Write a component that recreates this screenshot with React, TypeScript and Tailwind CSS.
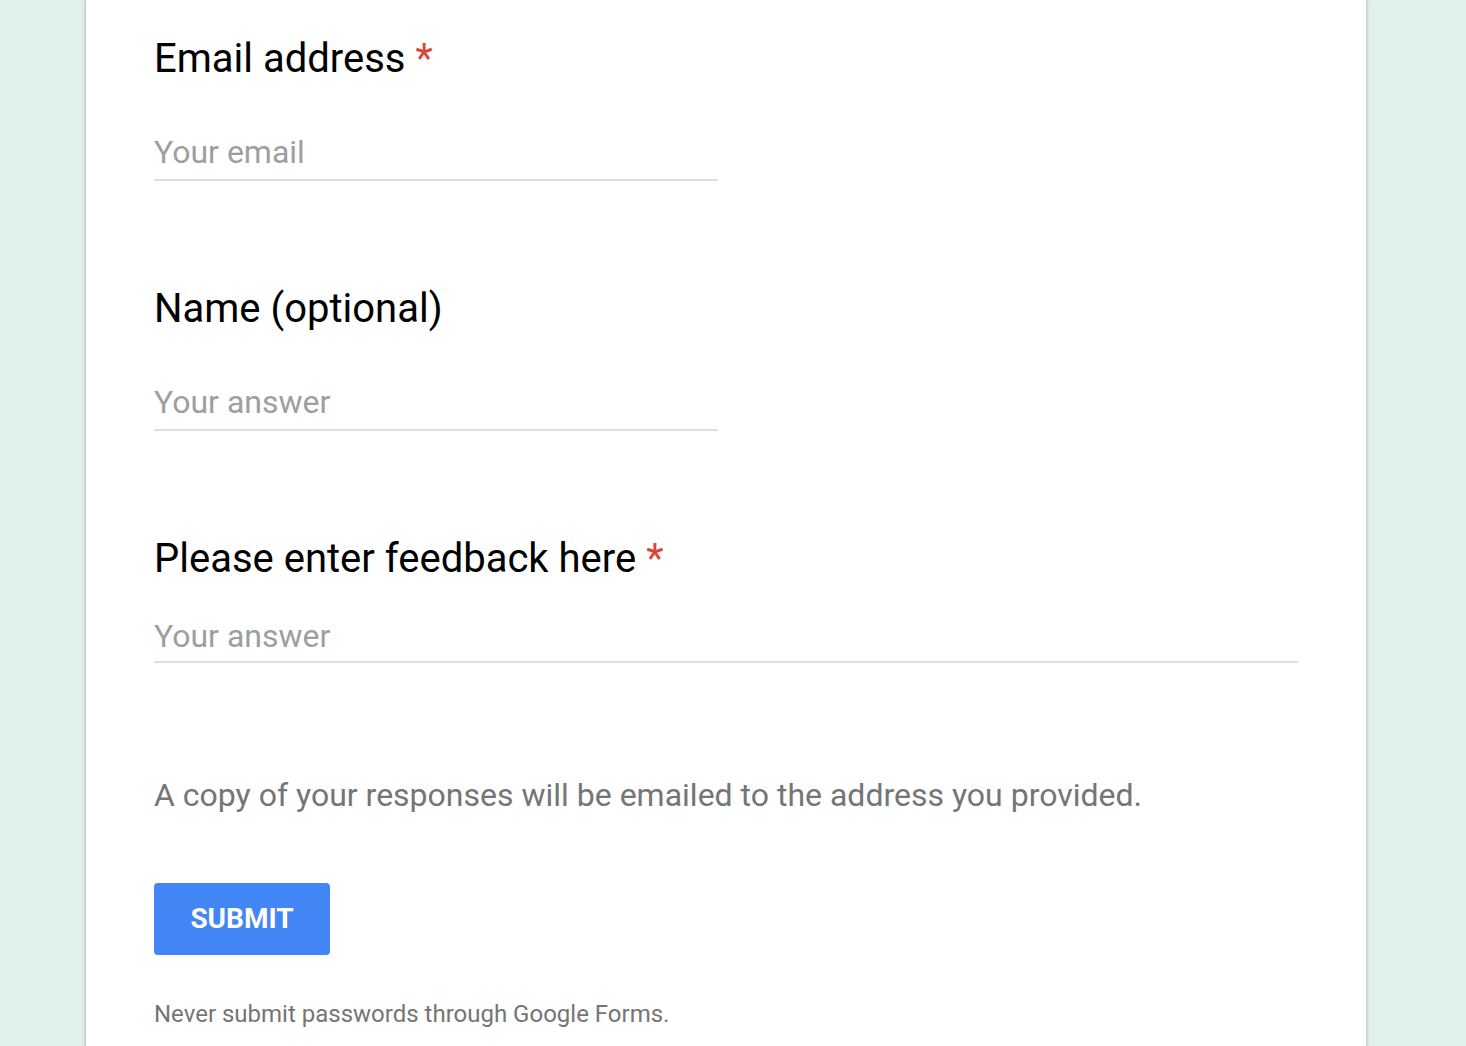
const Question = ({ title, required }: { title: string; required?: boolean }) => (
  <h2 className="text-[40px] leading-[48px] text-black">
    {title}
    {required && <span className="ml-[10px] text-[#db4437]">*</span>}
  </h2>
);

const Answer = ({ placeholder, wide }: { placeholder: string; wide?: boolean }) => (
  <input
    type="text"
    placeholder={placeholder}
    className={
      (wide ? "w-full h-[47px] pb-[5px] " : "w-[564px] h-[49px] pb-[7px] ") +
      "border-b-2 border-[#e0e0e0] bg-transparent text-[32px] leading-[40px] text-[#212121] outline-none placeholder:text-[#9e9e9e]"
    }
  />
);

export default function App() {
  return (
    <div className="flex min-h-[1046px] w-full bg-[#e0f1e9] font-['Roboto',sans-serif]">
      <div className="ml-[86px] flex w-[1280px] flex-col bg-white px-[68px] pt-[35px] pb-[20px] shadow-[0_0_4px_rgba(0,0,0,0.3)]">
        <Question title="Email address" required />
        <div className="mt-[49px]">
          <Answer placeholder="Your email" />
        </div>

        <div className="mt-[104px]">
          <Question title="Name (optional)" />
        </div>
        <div className="mt-[49px]">
          <Answer placeholder="Your answer" />
        </div>

        <div className="mt-[104px]">
          <Question title="Please enter feedback here" required />
        </div>
        <div className="mt-[33px]">
          <Answer placeholder="Your answer" wide />
        </div>

        <p className="mt-[112px] text-[32px] leading-[40px] text-[#757575]">
          A copy of your responses will be emailed to the address you provided.
        </p>

        <button className="mt-[68px] flex h-[72px] w-[176px] items-center justify-center rounded-[4px] bg-[#4285f4] text-[28px] font-bold text-white">
          SUBMIT
        </button>

        <p className="mt-[43px] text-[24px] leading-[32px] text-[#757575]">
          Never submit passwords through Google Forms.
        </p>
      </div>
    </div>
  );
}
